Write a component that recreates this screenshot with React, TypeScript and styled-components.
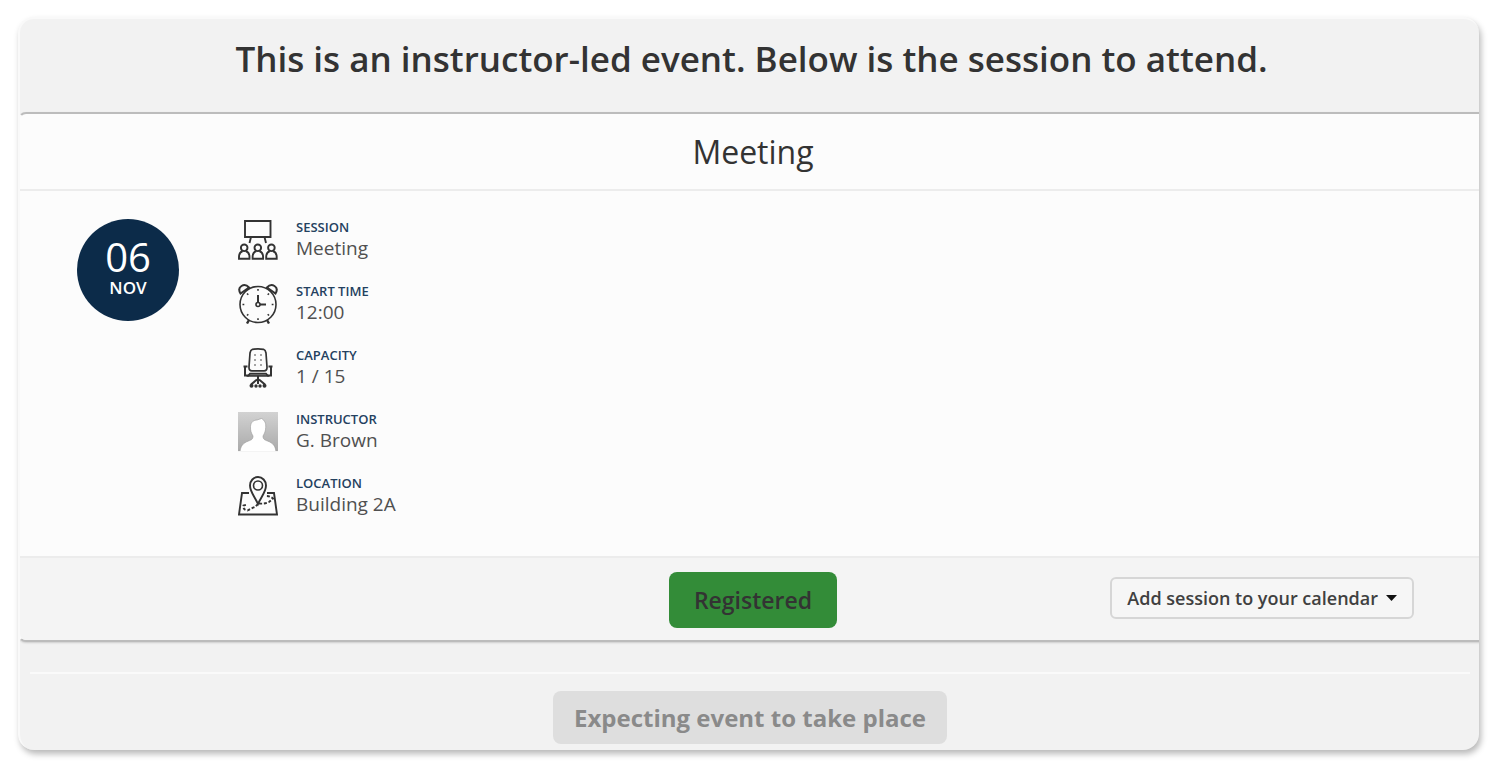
import React from "react";
import styled, { createGlobalStyle } from "styled-components";

const GlobalStyle = createGlobalStyle`
  *, *::before, *::after { box-sizing: border-box; }
  body {
    margin: 0;
    background: #fff;
    color: #333;
    font-family: "Open Sans", "Noto Sans", sans-serif;
  }
`;

const Page = styled.main`
  padding: 17px 21px 17px 18px;
`;

const Panel = styled.div`
  overflow: hidden;
  border-radius: 16px;
  background: #f2f2f2;
  border: 2px solid #f9f9f9;
  border-width: 2px 0 0 2px;
  box-shadow: 2px 4px 6px rgba(0, 0, 0, 0.28);
`;

const Intro = styled.h1`
  margin: 0;
  padding: 16px 0 29px 4px;
  font-size: 35px;
  line-height: 48px;
  font-weight: 600;
  text-align: center;
`;

const SessionCard = styled.section`
  margin: 0 -9px 0 -2px;
  border: 2px solid #bcbcbc;
  border-left-color: #fafafa;
  border-radius: 8px;
  background: #fcfcfc;
  box-shadow: 0 1px 2px rgba(0, 0, 0, 0.15);
  overflow: hidden;
`;

const SessionTitle = styled.h2`
  margin: 0;
  padding: 14px 0 13px;
  border-bottom: 2px solid #ececec;
  font-size: 32px;
  line-height: 48px;
  font-weight: 400;
  text-align: center;
`;

const SessionBody = styled.div`
  display: flex;
  align-items: flex-start;
  gap: 59px;
  padding: 28px 57px 40px;
`;

const DateBadge = styled.time`
  display: flex;
  flex-direction: column;
  align-items: center;
  flex: none;
  width: 102px;
  height: 102px;
  padding-top: 17px;
  border-radius: 50%;
  background: #0c2b49;
  color: #fff;
`;

const Day = styled.span`
  font-size: 40px;
  line-height: 42px;
`;

const Month = styled.span`
  font-size: 17px;
  line-height: 20px;
  font-weight: 600;
`;

const Details = styled.dl`
  display: grid;
  gap: 24px;
  margin: 0;
  padding-top: 1px;
`;

const Detail = styled.div`
  display: grid;
  grid-template-columns: 40px auto;
  grid-template-rows: 17px 23px;
  column-gap: 18px;
  svg {
    grid-row: 1 / 3;
    width: 40px;
    height: 40px;
  }
`;

const Label = styled.dt`
  color: #24415f;
  font-size: 13px;
  line-height: 14px;
  font-weight: 600;
  text-transform: uppercase;
`;

const Value = styled.dd`
  margin: 0;
  color: #505050;
  font-size: 19px;
  line-height: 22px;
`;

const SessionFooter = styled.footer`
  display: grid;
  grid-template-columns: 1fr auto 1fr;
  align-items: center;
  padding: 14px 72px 12px;
  border-top: 2px solid #ececec;
  background: #f4f4f4;
`;

const RegisteredButton = styled.button`
  grid-column: 2;
  height: 56px;
  padding: 0 25px;
  border: 0;
  border-radius: 8px;
  background: #338c38;
  color: #333;
  font: 600 23px/32px "Trebuchet MS", "Open Sans", sans-serif;
`;

const CalendarButton = styled.button`
  display: flex;
  align-items: center;
  justify-self: end;
  gap: 8px;
  height: 42px;
  margin-bottom: 4px;
  padding: 0 15px;
  border: 2px solid #d6d6d6;
  border-radius: 6px;
  background: #f6f6f6;
  color: #404040;
  font: 600 18px/24px "Trebuchet MS", "Open Sans", sans-serif;
  white-space: nowrap;
`;

const Status = styled.div`
  margin: 30px 9px 0 10px;
  padding: 17px 0 6px;
  border-top: 2px solid #fafafa;
  text-align: center;
`;

const StatusButton = styled.button`
  display: block;
  height: 53px;
  margin: 0 auto;
  padding: 0 21px;
  border: 0;
  border-radius: 8px;
  background: #dedede;
  color: #8a8a8a;
  font: 700 24px/32px "Open Sans", sans-serif;
`;

function SessionIcon() {
  return (
    <svg viewBox="0 0 40 40" fill="none" stroke="#333" strokeWidth="1.900" aria-hidden="true">
      <path d="M7 1h25.500v16H7z M13 17l-1.500 6 M26.500 17l1.500 6" />
      {[0, 13.6, 27.2].map((x) => (
        <g key={x} transform={`translate(${x} 0)`}>
          <circle cx="6.200" cy="27.800" r="3.300" />
          <path d="M4.600 31q-3.600 1.500-3.600 6v1.800h10.500V37q0-4.500-3.700-6" />
        </g>
      ))}
    </svg>
  );
}

function ClockIcon() {
  return (
    <svg viewBox="0 0 40 40" fill="none" stroke="#333" strokeWidth="1.600" aria-hidden="true">
      <circle cx="20" cy="20.500" r="18" />
      <path d="M2.500 9.500Q-.5 4.500 3.500 2T11 3.500z M37.500 9.500Q40.500 4.500 36.500 2T29 3.500z" strokeWidth="2" />
      <path d="M20 11v7.500M22 20.500h6" strokeWidth="2" />
      <circle cx="20" cy="20.500" r="2" />
      <path d="M20 5v1.800M20 34.200V36M4.500 20.500h1.800M33.700 20.500h1.800M9 9.500l1.300 1.300M31 9.500l-1.300 1.300M9 31.500l1.300-1.300M31 31.500l-1.300-1.300" />
      <path d="M11 36l-2 3.500M29 36l2 3.500" strokeWidth="2.400" />
    </svg>
  );
}

function ChairIcon() {
  return (
    <svg viewBox="0 0 40 40" fill="none" stroke="#333" strokeWidth="1.700" aria-hidden="true">
      <path d="M14.500 1.300Q20 .5 25.500 1.300Q27.500 2 28 5l1 14q.2 3.800-3 3.800H14q-3.200 0-3-3.800L12 5q.5-3 2.500-3.700z" />
      <path d="M16 7h2M22 7h2M16 12h2M22 12h2M16 17h2M22 17h2" stroke="#888" />
      <path d="M5.500 18.500h4M30.500 18.500h4M7 19v8.500h4M33 19v8.500h-4" strokeWidth="2" />
      <path d="M12 25.500h16l2 2.500H10z" fill="#777" />
      <path d="M20 28v8M19 31.500l-6 5M21 31.500l6 5" strokeWidth="2" />
      <g fill="#333" stroke="none">
        <circle cx="13.500" cy="37.800" r="2" />
        <circle cx="18" cy="38" r="1.700" />
        <circle cx="22" cy="38" r="1.700" />
        <circle cx="26.500" cy="37.800" r="2" />
      </g>
    </svg>
  );
}

function AvatarIcon() {
  return (
    <svg viewBox="0 0 40 40" aria-hidden="true">
      <defs>
        <linearGradient id="avatar-shade" x1="0" y1="0" x2="0" y2="1">
          <stop offset="0" stopColor="#d2d2d2" />
          <stop offset="1" stopColor="#a9a9a9" />
        </linearGradient>
      </defs>
      <path d="M0 0h40v40H0z" fill="url(#avatar-shade)" />
      <path
        d="M2 40c.5-6 3-9 8.500-11 3.500-1.200 4.500-2.200 4.500-5-1.800-3-2.700-5.500-2.500-9.500C12.700 10 16 8 19 8l4.500-1.500c3.500 2 4.500 5 4.200 9-.1 3.500-1 5.500-2.700 8.500 0 2.800 1 3.800 4.500 5C35 31 37.500 34 38 40z"
        fill="#fff"
        stroke="#999"
        strokeWidth=".6"
      />
      <path d="M0 39h40v1H0z" fill="#f4f4f4" />
    </svg>
  );
}

function MapIcon() {
  return (
    <svg viewBox="0 0 40 40" fill="none" stroke="#333" strokeWidth="1.900" aria-hidden="true">
      <path d="M11 17H4L1 38.500h38L36 17h-7" />
      <path d="M20 28C17 21 12 16 12 9.500a8 8.500 0 0 1 16 0C28 16 23 21 20 28z" />
      <circle cx="20" cy="9.500" r="4.500" strokeWidth="1.600" />
      <path d="M20 28l-3 3q-4 1.500-7.500 3.500-5-1-4-5l4-1" strokeDasharray="3 1.800" />
      <path d="M21 27.500q6 .5 10-1.500l4-3.500q-3-2.500-6.500-2.500" strokeDasharray="3 1.800" />
    </svg>
  );
}

function Caret() {
  return (
    <svg width="11" height="6" viewBox="0 0 11 6" aria-hidden="true">
      <path d="M0 0h11L5.500 6z" fill="#111" />
    </svg>
  );
}

const details = [
  { label: "Session", value: "Meeting", Icon: SessionIcon },
  { label: "Start time", value: "12:00", Icon: ClockIcon },
  { label: "Capacity", value: "1 / 15", Icon: ChairIcon },
  { label: "Instructor", value: "G. Brown", Icon: AvatarIcon },
  { label: "Location", value: "Building 2A", Icon: MapIcon },
];

export default function App() {
  return (
    <>
      <GlobalStyle />
      <Page>
        <Panel>
          <Intro>This is an instructor-led event. Below is the session to attend.</Intro>
          <SessionCard>
            <SessionTitle>Meeting</SessionTitle>
            <SessionBody>
              <DateBadge>
                <Day>06</Day>
                <Month>NOV</Month>
              </DateBadge>
              <Details>
                {details.map(({ label, value, Icon }) => (
                  <Detail key={label}>
                    <Icon />
                    <Label>{label}</Label>
                    <Value>{value}</Value>
                  </Detail>
                ))}
              </Details>
            </SessionBody>
            <SessionFooter>
              <RegisteredButton type="button">Registered</RegisteredButton>
              <CalendarButton type="button" aria-haspopup="menu">
                Add session to your calendar
                <Caret />
              </CalendarButton>
            </SessionFooter>
          </SessionCard>
          <Status>
            <StatusButton type="button" disabled>
              Expecting event to take place
            </StatusButton>
          </Status>
        </Panel>
      </Page>
    </>
  );
}
